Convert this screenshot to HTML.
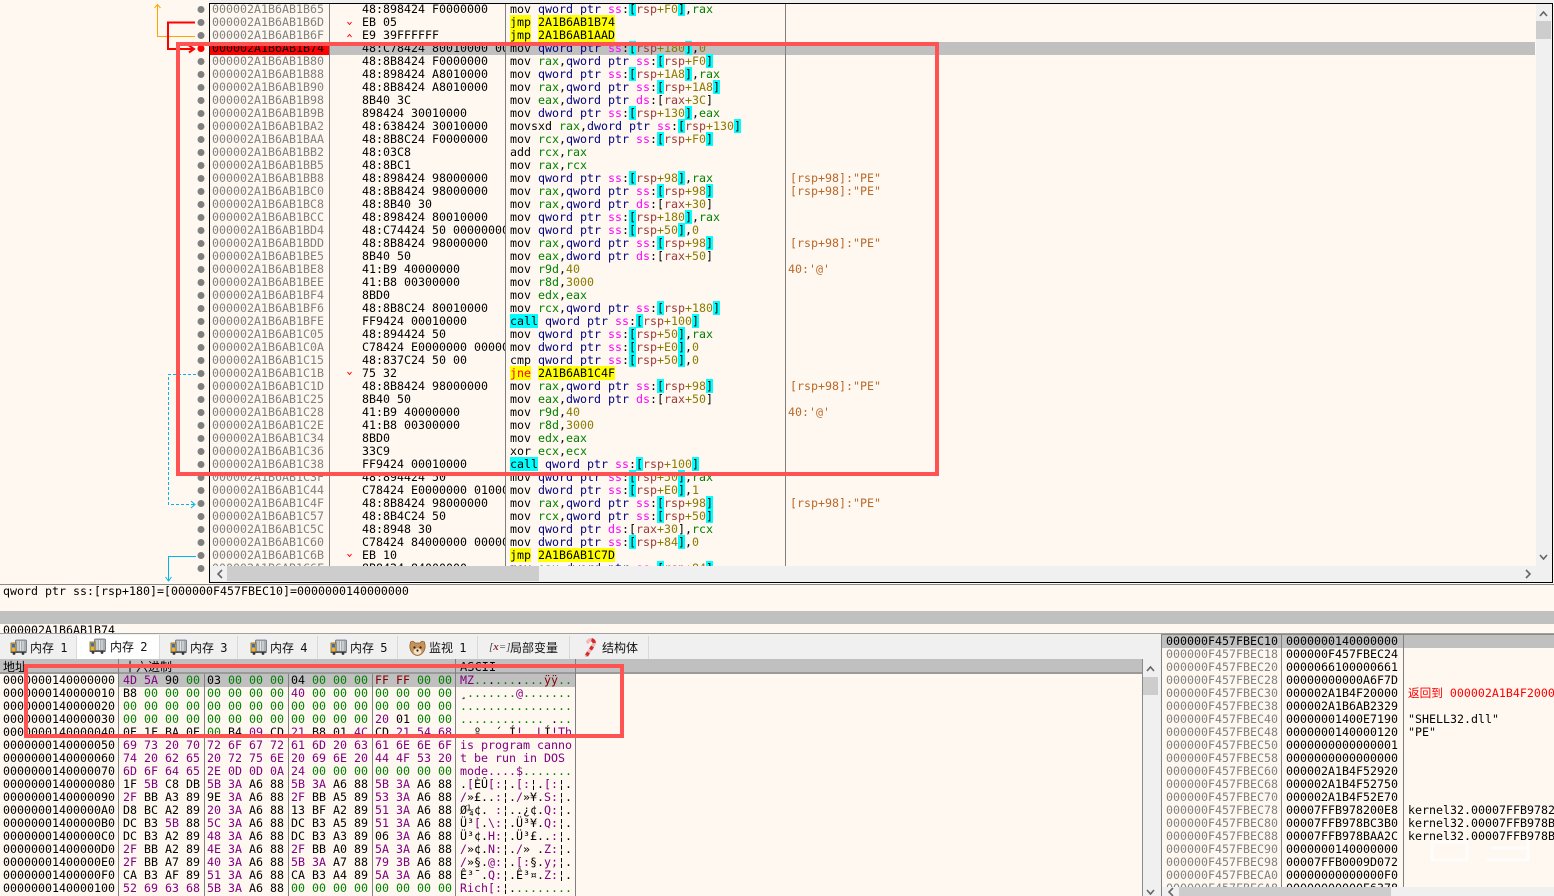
<!DOCTYPE html>
<html lang="zh"><head><meta charset="utf-8"><title>x64dbg</title>
<style>
html,body{margin:0;padding:0;width:1554px;height:896px;overflow:hidden;background:#fff8f0}
body{position:relative;font-family:"DejaVu Sans Mono","Liberation Mono","Noto Sans CJK SC",monospace;font-size:11.63px;color:#000}
pre{position:absolute;margin:0;font:inherit;line-height:13px;overflow:hidden;white-space:pre}
div{position:absolute}
i{font-style:normal}
.q{color:#000080}.s{color:#ff00ff}.c{background:#00ffff}.m{color:#a03838}.n{color:#8a7a00}.g{color:#008000}
.y{background:#ffff00}.j{background:#ffff00;color:#ff0000}
.p{color:#800080}.z{color:#008000}.f{color:#800000}
.t{color:#b8692a}
.tab{top:636px;height:23px;background:#f0f0f0;border-right:1px solid #d9d9d9;box-sizing:border-box}
.tt{position:absolute;top:4px;font-size:12px;line-height:17px;font-family:"DejaVu Sans Mono","Noto Sans CJK SC",sans-serif;white-space:pre;color:#111;word-spacing:-1px}
.sep{background:#808080;width:1px}
</style></head><body>

<!-- disassembly -->
<div style="left:0;top:0;width:1554px;height:3px;background:#f0f0f0"></div>
<div style="left:0;top:0;width:209px;height:3px;background:#fff8f0"></div>
<div style="left:330px;top:42px;width:1205px;height:13px;background:#c0c0c0"></div>
<div style="left:210px;top:42px;width:119px;height:13px;background:#ff0000"></div>
<pre style="left:212px;top:3px;width:116px;height:563px;color:#808080">000002A1B6AB1B65
000002A1B6AB1B6D
000002A1B6AB1B6F
<i style="color:#000">000002A1B6AB1B74</i>
000002A1B6AB1B80
000002A1B6AB1B88
000002A1B6AB1B90
000002A1B6AB1B98
000002A1B6AB1B9B
000002A1B6AB1BA2
000002A1B6AB1BAA
000002A1B6AB1BB2
000002A1B6AB1BB5
000002A1B6AB1BB8
000002A1B6AB1BC0
000002A1B6AB1BC8
000002A1B6AB1BCC
000002A1B6AB1BD4
000002A1B6AB1BDD
000002A1B6AB1BE5
000002A1B6AB1BE8
000002A1B6AB1BEE
000002A1B6AB1BF4
000002A1B6AB1BF6
000002A1B6AB1BFE
000002A1B6AB1C05
000002A1B6AB1C0A
000002A1B6AB1C15
000002A1B6AB1C1B
000002A1B6AB1C1D
000002A1B6AB1C25
000002A1B6AB1C28
000002A1B6AB1C2E
000002A1B6AB1C34
000002A1B6AB1C36
000002A1B6AB1C38
000002A1B6AB1C3F
000002A1B6AB1C44
000002A1B6AB1C4F
000002A1B6AB1C57
000002A1B6AB1C5C
000002A1B6AB1C60
000002A1B6AB1C6B
000002A1B6AB1C6F</pre>
<pre style="left:362px;top:3px;width:143px;height:563px">48:898424 F0000000
EB 05
E9 39FFFFFF
48:C78424 80010000 00000000
48:8B8424 F0000000
48:898424 A8010000
48:8B8424 A8010000
8B40 3C
898424 30010000
48:638424 30010000
48:8B8C24 F0000000
48:03C8
48:8BC1
48:898424 98000000
48:8B8424 98000000
48:8B40 30
48:898424 80010000
48:C74424 50 00000000
48:8B8424 98000000
8B40 50
41:B9 40000000
41:B8 00300000
8BD0
48:8B8C24 80010000
FF9424 00010000
48:894424 50
C78424 E0000000 00000000
48:837C24 50 00
75 32
48:8B8424 98000000
8B40 50
41:B9 40000000
41:B8 00300000
8BD0
33C9
FF9424 00010000
48:894424 50
C78424 E0000000 01000000
48:8B8424 98000000
48:8B4C24 50
48:8948 30
C78424 84000000 00000000
EB 10
8B8424 84000000</pre>
<pre style="left:510px;top:3px;width:275px;height:563px">mov <i class=q>qword ptr</i> <i class=s>ss</i>:<i class=c>[</i><i class=m>rsp</i><i class=n>+F0</i><i class=c>]</i>,<i class=g>rax</i>
<i class=y>jmp</i> <i class=y>2A1B6AB1B74</i>
<i class=y>jmp</i> <i class=y>2A1B6AB1AAD</i>
mov <i class=q>qword ptr</i> <i class=s>ss</i>:<i class=c>[</i><i class=m>rsp</i><i class=n>+180</i><i class=c>]</i>,<i class=n>0</i>
mov <i class=g>rax</i>,<i class=q>qword ptr</i> <i class=s>ss</i>:<i class=c>[</i><i class=m>rsp</i><i class=n>+F0</i><i class=c>]</i>
mov <i class=q>qword ptr</i> <i class=s>ss</i>:<i class=c>[</i><i class=m>rsp</i><i class=n>+1A8</i><i class=c>]</i>,<i class=g>rax</i>
mov <i class=g>rax</i>,<i class=q>qword ptr</i> <i class=s>ss</i>:<i class=c>[</i><i class=m>rsp</i><i class=n>+1A8</i><i class=c>]</i>
mov <i class=g>eax</i>,<i class=q>dword ptr</i> <i class=s>ds</i>:[<i class=m>rax</i><i class=n>+3C</i>]
mov <i class=q>dword ptr</i> <i class=s>ss</i>:<i class=c>[</i><i class=m>rsp</i><i class=n>+130</i><i class=c>]</i>,<i class=g>eax</i>
movsxd <i class=g>rax</i>,<i class=q>dword ptr</i> <i class=s>ss</i>:<i class=c>[</i><i class=m>rsp</i><i class=n>+130</i><i class=c>]</i>
mov <i class=g>rcx</i>,<i class=q>qword ptr</i> <i class=s>ss</i>:<i class=c>[</i><i class=m>rsp</i><i class=n>+F0</i><i class=c>]</i>
add <i class=g>rcx</i>,<i class=g>rax</i>
mov <i class=g>rax</i>,<i class=g>rcx</i>
mov <i class=q>qword ptr</i> <i class=s>ss</i>:<i class=c>[</i><i class=m>rsp</i><i class=n>+98</i><i class=c>]</i>,<i class=g>rax</i>
mov <i class=g>rax</i>,<i class=q>qword ptr</i> <i class=s>ss</i>:<i class=c>[</i><i class=m>rsp</i><i class=n>+98</i><i class=c>]</i>
mov <i class=g>rax</i>,<i class=q>qword ptr</i> <i class=s>ds</i>:[<i class=m>rax</i><i class=n>+30</i>]
mov <i class=q>qword ptr</i> <i class=s>ss</i>:<i class=c>[</i><i class=m>rsp</i><i class=n>+180</i><i class=c>]</i>,<i class=g>rax</i>
mov <i class=q>qword ptr</i> <i class=s>ss</i>:<i class=c>[</i><i class=m>rsp</i><i class=n>+50</i><i class=c>]</i>,<i class=n>0</i>
mov <i class=g>rax</i>,<i class=q>qword ptr</i> <i class=s>ss</i>:<i class=c>[</i><i class=m>rsp</i><i class=n>+98</i><i class=c>]</i>
mov <i class=g>eax</i>,<i class=q>dword ptr</i> <i class=s>ds</i>:[<i class=m>rax</i><i class=n>+50</i>]
mov <i class=g>r9d</i>,<i class=n>40</i>
mov <i class=g>r8d</i>,<i class=n>3000</i>
mov <i class=g>edx</i>,<i class=g>eax</i>
mov <i class=g>rcx</i>,<i class=q>qword ptr</i> <i class=s>ss</i>:<i class=c>[</i><i class=m>rsp</i><i class=n>+180</i><i class=c>]</i>
<i class=c>call</i> <i class=q>qword ptr</i> <i class=s>ss</i>:<i class=c>[</i><i class=m>rsp</i><i class=n>+100</i><i class=c>]</i>
mov <i class=q>qword ptr</i> <i class=s>ss</i>:<i class=c>[</i><i class=m>rsp</i><i class=n>+50</i><i class=c>]</i>,<i class=g>rax</i>
mov <i class=q>dword ptr</i> <i class=s>ss</i>:<i class=c>[</i><i class=m>rsp</i><i class=n>+E0</i><i class=c>]</i>,<i class=n>0</i>
cmp <i class=q>qword ptr</i> <i class=s>ss</i>:<i class=c>[</i><i class=m>rsp</i><i class=n>+50</i><i class=c>]</i>,<i class=n>0</i>
<i class=j>jne</i> <i class=y>2A1B6AB1C4F</i>
mov <i class=g>rax</i>,<i class=q>qword ptr</i> <i class=s>ss</i>:<i class=c>[</i><i class=m>rsp</i><i class=n>+98</i><i class=c>]</i>
mov <i class=g>eax</i>,<i class=q>dword ptr</i> <i class=s>ds</i>:[<i class=m>rax</i><i class=n>+50</i>]
mov <i class=g>r9d</i>,<i class=n>40</i>
mov <i class=g>r8d</i>,<i class=n>3000</i>
mov <i class=g>edx</i>,<i class=g>eax</i>
xor <i class=g>ecx</i>,<i class=g>ecx</i>
<i class=c>call</i> <i class=q>qword ptr</i> <i class=s>ss</i>:<i class=c>[</i><i class=m>rsp</i><i class=n>+100</i><i class=c>]</i>
mov <i class=q>qword ptr</i> <i class=s>ss</i>:<i class=c>[</i><i class=m>rsp</i><i class=n>+50</i><i class=c>]</i>,<i class=g>rax</i>
mov <i class=q>dword ptr</i> <i class=s>ss</i>:<i class=c>[</i><i class=m>rsp</i><i class=n>+E0</i><i class=c>]</i>,<i class=n>1</i>
mov <i class=g>rax</i>,<i class=q>qword ptr</i> <i class=s>ss</i>:<i class=c>[</i><i class=m>rsp</i><i class=n>+98</i><i class=c>]</i>
mov <i class=g>rcx</i>,<i class=q>qword ptr</i> <i class=s>ss</i>:<i class=c>[</i><i class=m>rsp</i><i class=n>+50</i><i class=c>]</i>
mov <i class=q>qword ptr</i> <i class=s>ds</i>:[<i class=m>rax</i><i class=n>+30</i>],<i class=g>rcx</i>
mov <i class=q>dword ptr</i> <i class=s>ss</i>:<i class=c>[</i><i class=m>rsp</i><i class=n>+84</i><i class=c>]</i>,<i class=n>0</i>
<i class=y>jmp</i> <i class=y>2A1B6AB1C7D</i>
mov <i class=g>eax</i>,<i class=q>dword ptr</i> <i class=s>ss</i>:<i class=c>[</i><i class=m>rsp</i><i class=n>+84</i><i class=c>]</i></pre>
<pre class="t" style="left:790px;top:172px;width:200px;height:13px;line-height:13px">[rsp+98]:"PE"</pre>
<pre class="t" style="left:790px;top:185px;width:200px;height:13px">[rsp+98]:"PE"</pre>
<pre class="t" style="left:790px;top:237px;width:200px;height:13px">[rsp+98]:"PE"</pre>
<pre class="t" style="left:788px;top:263px;width:200px;height:13px">40:'@'</pre>
<pre class="t" style="left:790px;top:380px;width:200px;height:13px">[rsp+98]:"PE"</pre>
<pre class="t" style="left:788px;top:406px;width:200px;height:13px">40:'@'</pre>
<pre class="t" style="left:790px;top:497px;width:200px;height:13px">[rsp+98]:"PE"</pre>

<!-- separators/frame -->
<div class="sep" style="left:329px;top:3px;height:563px"></div>
<div class="sep" style="left:505px;top:3px;height:563px"></div>
<div class="sep" style="left:785px;top:3px;height:563px"></div>
<div style="left:209px;top:3px;width:1344px;height:1px;background:#000"></div>
<div style="left:209px;top:3px;width:1px;height:580px;background:#000"></div>
<div style="left:1552px;top:3px;width:1px;height:580px;background:#000"></div>
<div style="left:209px;top:582px;width:1344px;height:1px;background:#000"></div>
<div style="left:0;top:584px;width:1554px;height:1px;background:#8a8a8a"></div>

<!-- scrollbars disasm -->
<div style="left:1536px;top:4px;width:16px;height:562px;background:#f0f0f0"></div>
<div style="left:1536px;top:21px;width:15px;height:18px;background:#cdcdcd"></div>
<div style="left:210px;top:566px;width:1342px;height:16px;background:#f0f0f0"></div>
<div style="left:227px;top:566px;width:312px;height:15px;background:#cdcdcd"></div>

<!-- info -->
<pre style="left:3px;top:585px;width:900px;height:13px">qword ptr ss:[rsp+180]=[000000F457FBEC10]=0000000140000000</pre>
<div style="left:0;top:611px;width:1554px;height:13px;background:#c0c0c0"></div>
<pre style="left:3px;top:624px;width:200px;height:9px">000002A1B6AB1B74</pre>
<div style="left:0;top:633px;width:1554px;height:1px;background:#a0a0a0"></div>

<!-- tab bar -->
<div style="left:0;top:634px;width:1161px;height:25px;background:#f0f0f0"></div>
<div class="tab" style="left:0;width:77px"><svg style="position:absolute;left:10px;top:3px" width="17" height="16" viewBox="0 0 17 16"><use href="#tr"/></svg><span class="tt" style="left:30px">内存 1</span></div>
<div class="tab" style="left:77px;width:83px;background:#fff;top:635px;height:24px"><svg style="position:absolute;left:12px;top:3px" width="17" height="16" viewBox="0 0 17 16"><use href="#tr"/></svg><span class="tt" style="left:33px">内存 2</span></div>
<div class="tab" style="left:160px;width:78px"><svg style="position:absolute;left:10px;top:3px" width="17" height="16" viewBox="0 0 17 16"><use href="#tr"/></svg><span class="tt" style="left:30px">内存 3</span></div>
<div class="tab" style="left:238px;width:80px"><svg style="position:absolute;left:12px;top:3px" width="17" height="16" viewBox="0 0 17 16"><use href="#tr"/></svg><span class="tt" style="left:32px">内存 4</span></div>
<div class="tab" style="left:318px;width:80px"><svg style="position:absolute;left:12px;top:3px" width="17" height="16" viewBox="0 0 17 16"><use href="#tr"/></svg><span class="tt" style="left:32px">内存 5</span></div>
<div class="tab" style="left:398px;width:80px"><svg style="position:absolute;left:11px;top:3px" width="17" height="18" viewBox="0 0 17 18"><path d="M1.500 3 Q4 1 6 4 L11 4 Q13 1 15.500 3 Q17 9 15 12 Q12.500 16.500 8.500 16.500 Q4.500 16.500 2 12 Q0 9 1.500 3Z" fill="#c8935a" stroke="#8a5a2a" stroke-width=".7"/><ellipse cx="8.500" cy="12.500" rx="4" ry="3.200" fill="#f5e2c4"/><circle cx="5.500" cy="8.500" r="1.100" fill="#222"/><circle cx="11.500" cy="8.500" r="1.100" fill="#222"/><circle cx="8.500" cy="11.500" r="1.100" fill="#222"/></svg><span class="tt" style="left:31px">监视 1</span></div>
<div class="tab" style="left:478px;width:92px"><span style="position:absolute;left:11px;top:5px;font:italic 11px 'Liberation Serif',serif;color:#444">[<b style="color:#8a3030">x</b>=]</span><span class="tt" style="left:32px">局部变量</span></div>
<div class="tab" style="left:570px;width:79px"><svg style="position:absolute;left:14px;top:2px" width="14" height="19" viewBox="0 0 14 19"><path d="M2.500 17.500 L9.500 7 Q11.500 3 8 1.800 Q5 1.300 3.800 4" fill="none" stroke="#f0b8b8" stroke-width="3.400" stroke-linecap="round"/><path d="M2.500 17.500 L4.500 14.500 M6.500 11.500 L8.500 8.500 M10.300 5 Q10 2.500 7.500 1.800" fill="none" stroke="#d02a2a" stroke-width="3.400"/></svg><span class="tt" style="left:32px">结构体</span></div>

<!-- dump header -->
<div style="left:0;top:659px;width:1142px;height:15px;background:#c0c0c0"></div>
<div style="left:0;top:672px;width:1142px;height:2px;background:#9a9a9a"></div>
<span class="tt" style="position:absolute;left:3px;top:659px;color:#000">地址</span>
<span class="tt" style="position:absolute;left:124px;top:659px;color:#000">十六进制</span>
<span class="tt" style="position:absolute;left:460px;top:659px;color:#000">ASCII</span>

<!-- dump body -->
<div style="left:119px;top:674px;width:456px;height:13px;background:#c0c0c0"></div>
<pre style="left:3px;top:674px;width:114px;height:222px">0000000140000000
0000000140000010
0000000140000020
0000000140000030
0000000140000040
0000000140000050
0000000140000060
0000000140000070
0000000140000080
0000000140000090
00000001400000A0
00000001400000B0
00000001400000C0
00000001400000D0
00000001400000E0
00000001400000F0
0000000140000100</pre>
<pre style="left:123px;top:674px;width:330px;height:222px"><i class=p>4D 5A</i> 90 <i class=z>00</i> 03 <i class=z>00 00 00</i> 04 <i class=z>00 00 00</i> <i class=f>FF FF</i> <i class=z>00 00</i>
B8 <i class=z>00 00 00 00 00 00 00</i> <i class=p>40</i> <i class=z>00 00 00 00 00 00 00</i>
<i class=z>00 00 00 00 00 00 00 00 00 00 00 00 00 00 00 00</i>
<i class=z>00 00 00 00 00 00 00 00 00 00 00 00</i> <i class=p>20</i> 01 <i class=z>00 00</i>
0E 1F BA 0E <i class=z>00</i> B4 <i class=p>09</i> CD <i class=p>21</i> B8 01 <i class=p>4C</i> CD <i class=p>21 54 68</i>
<i class=p>69 73 20 70 72 6F 67 72 61 6D 20 63 61 6E 6E 6F</i>
<i class=p>74 20 62 65 20 72 75 6E 20 69 6E 20 44 4F 53 20</i>
<i class=p>6D 6F 64 65 2E 0D 0D 0A 24</i> <i class=z>00 00 00 00 00 00 00</i>
1F <i class=p>5B</i> C8 DB <i class=p>5B 3A</i> A6 88 <i class=p>5B 3A</i> A6 88 <i class=p>5B 3A</i> A6 88
<i class=p>2F</i> BB A3 89 9E <i class=p>3A</i> A6 88 <i class=p>2F</i> BB A5 89 <i class=p>53 3A</i> A6 88
D8 BC A2 89 <i class=p>20 3A</i> A6 88 13 BF A2 89 <i class=p>51 3A</i> A6 88
DC B3 <i class=p>5B</i> 88 <i class=p>5C 3A</i> A6 88 DC B3 A5 89 <i class=p>51 3A</i> A6 88
DC B3 A2 89 <i class=p>48 3A</i> A6 88 DC B3 A3 89 06 <i class=p>3A</i> A6 88
<i class=p>2F</i> BB A2 89 <i class=p>4E 3A</i> A6 88 <i class=p>2F</i> BB A0 89 <i class=p>5A 3A</i> A6 88
<i class=p>2F</i> BB A7 89 <i class=p>40 3A</i> A6 88 <i class=p>5B 3A</i> A7 88 <i class=p>79 3B</i> A6 88
CA B3 AF 89 <i class=p>51 3A</i> A6 88 CA B3 A4 89 <i class=p>5A 3A</i> A6 88
<i class=p>52 69 63 68 5B 3A</i> A6 88 <i class=z>00 00 00 00 00 00 00 00</i></pre>
<pre style="left:460px;top:674px;width:114px;height:222px"><i class=p>MZ</i><i class=z>..</i>.<i class=z>...</i>.<i class=z>...</i><i class=f>ÿÿ</i><i class=z>..</i>
¸<i class=z>.......</i><i class=p>@</i><i class=z>.......</i>
<i class=z>................</i>
<i class=z>............</i> .<i class=z>..</i>
..º.<i class=z>.</i>´.Í<i class=p>!</i>¸.<i class=p>L</i>Í<i class=p>!Th</i>
<i class=p>is program canno</i>
<i class=p>t be run in DOS </i>
<i class=p>mode....$</i><i class=z>.......</i>
.<i class=p>[</i>ÈÛ<i class=p>[:</i>¦.<i class=p>[:</i>¦.<i class=p>[:</i>¦.
<i class=p>/</i>»£..<i class=p>:</i>¦.<i class=p>/</i>»¥.<i class=p>S:</i>¦.
Ø¼¢.<i class=p> :</i>¦..¿¢.<i class=p>Q:</i>¦.
Ü³<i class=p>[</i>.<i class=p>\:</i>¦.Ü³¥.<i class=p>Q:</i>¦.
Ü³¢.<i class=p>H:</i>¦.Ü³£..<i class=p>:</i>¦.
<i class=p>/</i>»¢.<i class=p>N:</i>¦.<i class=p>/</i>» .<i class=p>Z:</i>¦.
<i class=p>/</i>»§.<i class=p>@:</i>¦.<i class=p>[:</i>§.<i class=p>y;</i>¦.
Ê³¯.<i class=p>Q:</i>¦.Ê³¤.<i class=p>Z:</i>¦.
<i class=p>Rich[:</i>¦.<i class=z>........</i></pre>
<div class="sep" style="left:118px;top:659px;height:237px"></div>
<div class="sep" style="left:204px;top:674px;height:222px"></div>
<div class="sep" style="left:288px;top:674px;height:222px"></div>
<div class="sep" style="left:372px;top:674px;height:222px"></div>
<div class="sep" style="left:455px;top:659px;height:237px"></div>
<div class="sep" style="left:575px;top:659px;height:237px"></div>

<!-- dump scrollbar -->
<div style="left:1142px;top:659px;width:20px;height:237px;background:#f0f0f0"></div>
<div style="left:1142px;top:659px;width:1px;height:237px;background:#8a8a8a"></div>
<div style="left:1143px;top:677px;width:15px;height:18px;background:#cdcdcd"></div>

<!-- stack -->
<div style="left:1162px;top:635px;width:392px;height:261px;background:#fff8f0"></div>
<div style="left:1162px;top:635px;width:392px;height:13px;background:#c0c0c0"></div>
<svg style="position:absolute;left:1162px;top:800px" width="392" height="87" viewBox="0 0 392 87"><g fill="none" stroke="#fff" stroke-opacity=".7" stroke-width="3"><path d="M270 42H305V60H270ZM325 34H366M329 48H366M325 60H366V34"/></g></svg>
<pre style="left:1166px;top:635px;width:114px;height:252px;color:#808080"><i style="color:#000">000000F457FBEC10</i>
000000F457FBEC18
000000F457FBEC20
000000F457FBEC28
000000F457FBEC30
000000F457FBEC38
000000F457FBEC40
000000F457FBEC48
000000F457FBEC50
000000F457FBEC58
000000F457FBEC60
000000F457FBEC68
000000F457FBEC70
000000F457FBEC78
000000F457FBEC80
000000F457FBEC88
000000F457FBEC90
000000F457FBEC98
000000F457FBECA0
000000F457FBECA8</pre>
<pre style="left:1286px;top:635px;width:114px;height:252px">0000000140000000
000000F457FBEC24
0000066100000661
00000000000A6F7D
000002A1B4F20000
000002A1B6AB2329
00000001400E7190
0000000140000120
0000000000000001
0000000000000000
000002A1B4F52920
000002A1B4F52750
000002A1B4F52E70
00007FFB978200E8
00007FFB978BC3B0
00007FFB978BAA2C
0000000140000000
00007FFB0009D072
00000000000000F0
00000000000E6378</pre>
<pre style="left:1408px;top:635px;width:146px;height:252px">




<i style="color:#ff0000;font-family:'DejaVu Sans Mono','Noto Sans CJK SC',monospace">返回到 000002A1B4F20000</i>

"SHELL32.dll"
"PE"





kernel32.00007FFB978200E8
kernel32.00007FFB978BC3B0
kernel32.00007FFB978BAA2C</pre>
<div class="sep" style="left:1161px;top:635px;height:261px"></div>
<div class="sep" style="left:1281px;top:635px;height:252px"></div>
<div class="sep" style="left:1403px;top:635px;height:252px"></div>
<div style="left:1161px;top:634px;width:393px;height:1px;background:#8a8a8a"></div>
<div style="left:1162px;top:887px;width:392px;height:9px;background:#f0f0f0"></div>
<div style="left:1179px;top:887px;width:212px;height:9px;background:#cdcdcd"></div>

<!-- arrows, dots, red boxes -->
<svg style="position:absolute;left:0;top:0" width="1554" height="896" viewBox="0 0 1554 896">
<defs>
<g id="tr"><rect x="5.500" y="1" width="11" height="11.500" rx="1" fill="#aab0b5" stroke="#6d7277" stroke-width=".8"/><path d="M8 2v10M10.500 2v10M13 2v10" stroke="#e3e6e8" stroke-width="1"/><rect x="1" y="4" width="5" height="9.500" fill="#e8b23a" stroke="#7d6420" stroke-width=".8"/><rect x="2" y="5" width="3" height="3.500" fill="#3f6fb0"/><rect x="1" y="12.500" width="15.500" height="1.500" fill="#555"/><circle cx="4" cy="14.500" r="1.400" fill="#333"/><circle cx="13" cy="14.500" r="1.400" fill="#333"/></g>
</defs>
<line x1="201" y1="9.500" x2="201" y2="570" stroke="#808080" stroke-width="7" stroke-linecap="round" stroke-dasharray="0 13"/>
<circle cx="201" cy="48.500" r="3.500" fill="#ff0000"/>
<path d="M195 36.500H157.500V5M154.500 8L157.500 4.500L160.500 8" fill="none" stroke="#ffa500" stroke-width="1"/>
<path d="M195 22.500H168V49H193M189 45.500L194 49L189 52.500" fill="none" stroke="#ff0000" stroke-width="2"/>
<path d="M196 374.500H168.500V504.500H194" fill="none" stroke="#00b4f0" stroke-width="1" stroke-dasharray="3 2"/>
<path d="M191 501L195 504.500L191 508" fill="none" stroke="#00b4f0" stroke-width="1"/>
<path d="M196 556.500H168.500V580M165.500 577L168.500 581L171.500 577" fill="none" stroke="#00b4f0" stroke-width="1"/>
<g fill="none" stroke="#ff0000" stroke-width="1"><path d="M347.500 22L349.500 24.500L351.500 22M347.500 372L349.500 374.500L351.500 372M347.500 554L349.500 556.500L351.500 554"/><path d="M347.500 37L349.500 34.500L351.500 37"/></g>
<g fill="none" stroke="#666" stroke-width="1.600"><path d="M1540 16L1543.500 12L1547 16M1540 555L1543.500 559L1547 555M222 570L218 574L222 578M1526 570L1530 574L1526 578M1147 671L1150.500 667L1154 671M1147 890L1150.500 894L1154 890M1173 888L1169 892L1173 896"/></g>
<rect x="178" y="44" width="759" height="430" fill="none" stroke="#ff5252" stroke-width="4"/>
<rect x="26" y="666" width="596" height="70" fill="none" stroke="#ff5252" stroke-width="4"/>
</svg>
</body></html>
